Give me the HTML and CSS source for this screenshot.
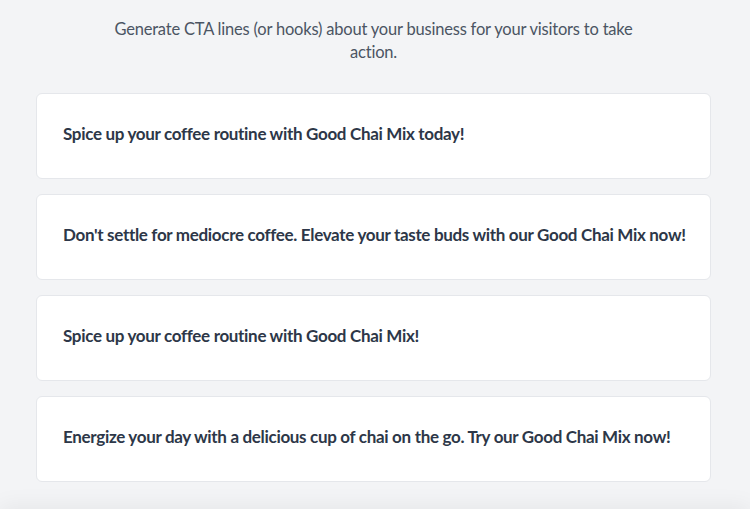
FILE: index.html
```html
<!DOCTYPE html>
<html lang="en">
<head>
<meta charset="utf-8">
<title>CTA lines</title>
<link rel="stylesheet" href="styles.css">
</head>
<body>
<main class="page">
  <p class="intro">Generate CTA lines (or hooks) about your business for your visitors to take action.</p>
  <ul class="results">
    <li class="card">Spice up your coffee routine with Good Chai Mix today!</li>
    <li class="card">Don't settle for mediocre coffee. Elevate your taste buds with our Good Chai Mix now!</li>
    <li class="card">Spice up your coffee routine with Good Chai Mix!</li>
    <li class="card">Energize your day with a delicious cup of chai on the go. Try our Good Chai Mix now!</li>
  </ul>
</main>
<div class="bottom-shade"></div>
</body>
</html>
```

FILE: styles.css
```css
html, body {
  margin: 0;
  padding: 0;
  background: #f3f4f6;
  height: 100%;
  overflow: hidden;
}
body {
  font-family: Lato, "Noto Sans", sans-serif;
  color: #2d3748;
}
.page {
  padding: 18px 39px 0 36px;
}
.intro {
  margin: 0 auto;
  max-width: 530px;
  text-align: center;
  font-size: 16.5px;
  line-height: 23px;
  letter-spacing: -0.2px;
  color: #4b5563;
}
.results {
  list-style: none;
  margin: 29px 0 0;
  padding: 0;
  display: flex;
  flex-direction: column;
  gap: 15px;
}
.card {
  background: #ffffff;
  border: 1px solid #e5e7eb;
  border-radius: 6px;
  box-sizing: border-box;
  height: 86px;
  display: flex;
  align-items: center;
  padding: 0 26px 6px;
  font-size: 17px;
  font-weight: 700;
  letter-spacing: -0.32px;
  white-space: nowrap;
  color: #2d3748;
}
.bottom-shade {
  position: fixed;
  left: 0;
  right: 0;
  bottom: -20px;
  height: 20px;
  box-shadow: 0 0 24px rgba(0,0,0,0.08);
}
```
